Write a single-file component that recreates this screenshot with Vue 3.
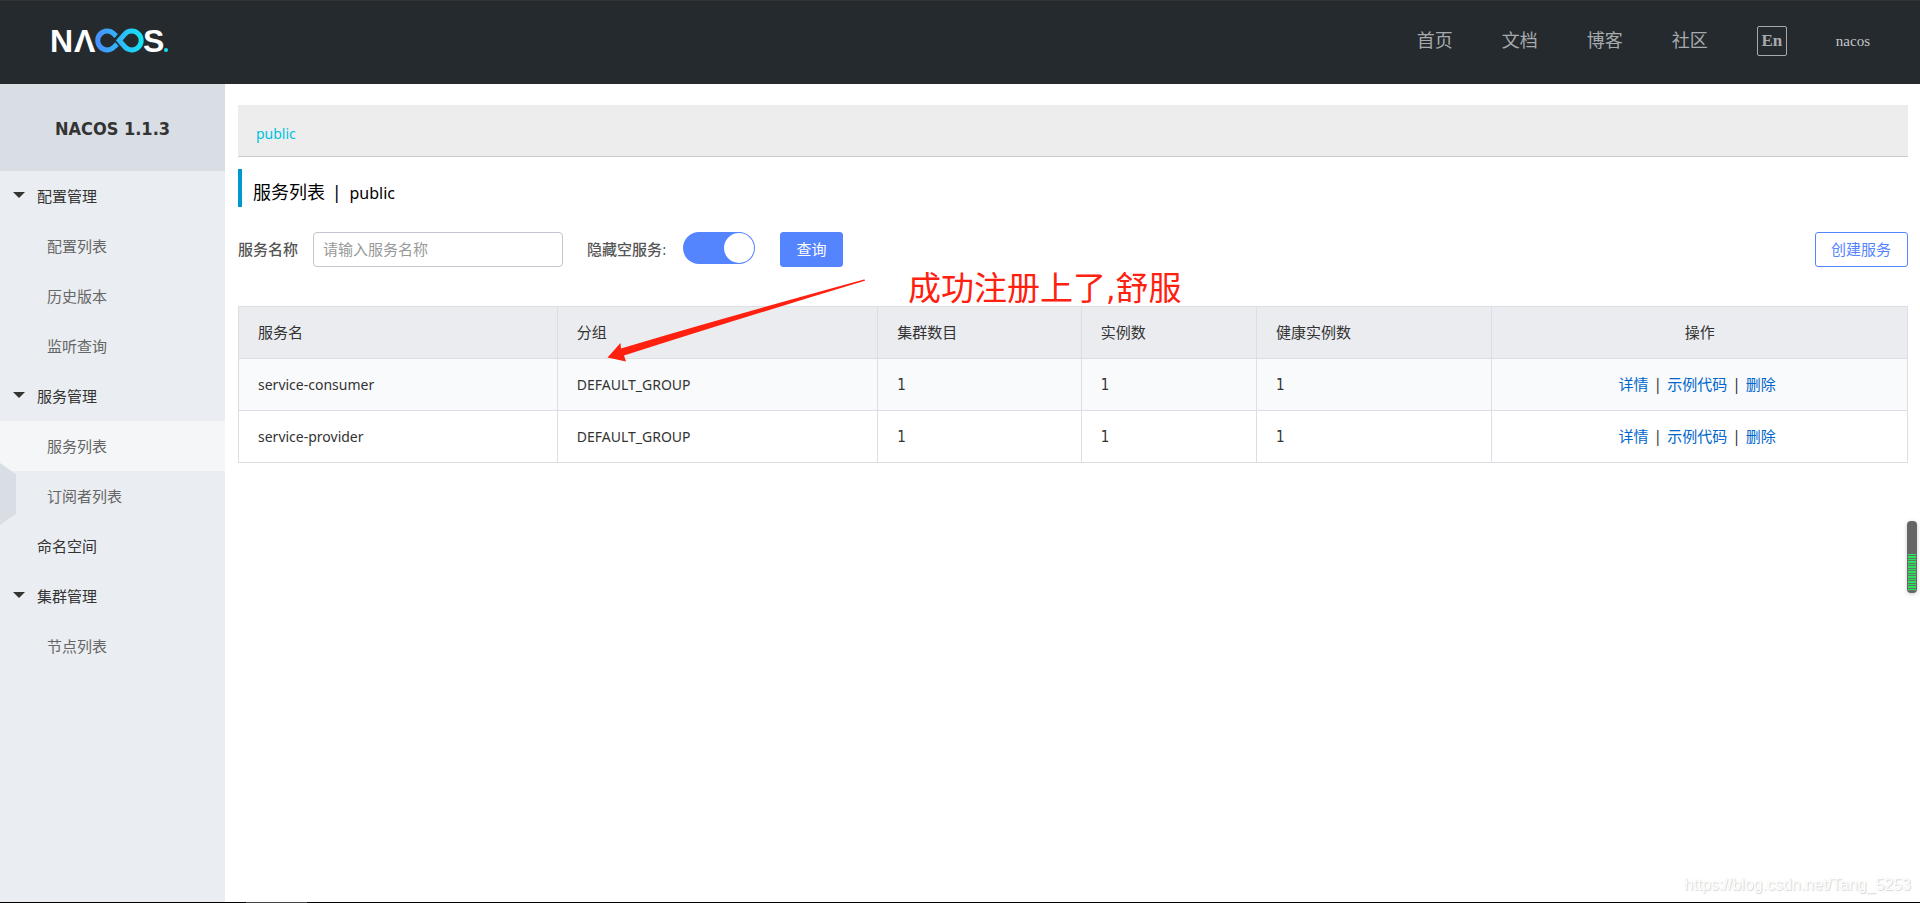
<script setup>
import { ref } from 'vue'

const navLinks = ['首页', '文档', '博客', '社区']

const menu = [
  { label: '配置管理', group: true },
  { label: '配置列表', child: true },
  { label: '历史版本', child: true },
  { label: '监听查询', child: true },
  { label: '服务管理', group: true },
  { label: '服务列表', child: true, active: true },
  { label: '订阅者列表', child: true },
  { label: '命名空间' },
  { label: '集群管理', group: true },
  { label: '节点列表', child: true },
]

const services = [
  { name: 'service-consumer', group: 'DEFAULT_GROUP', clusters: 1, instances: 1, healthy: 1 },
  { name: 'service-provider', group: 'DEFAULT_GROUP', clusters: 1, instances: 1, healthy: 1 },
]

const keyword = ref('')
const hideEmpty = ref(true)
</script>

<template>
  <div class="page">
    <header class="topbar">
      <a class="logo" href="#" aria-label="NACOS">
        <svg width="128" height="44" viewBox="-6 0 128 44">
          <defs>
            <linearGradient id="loop" gradientUnits="userSpaceOnUse" x1="43" y1="0" x2="91" y2="0">
              <stop offset="0" stop-color="#4a8cff" />
              <stop offset="1" stop-color="#14e4f5" />
            </linearGradient>
          </defs>
          <text class="logo-letter" x="-2" y="33">N</text>
          <text class="logo-letter wide" x="22" y="33">Λ</text>
          <g fill="none" stroke="url(#loop)" stroke-width="5">
            <path d="M64.300 17L61.700 14.800A9.400 9.400 0 1 0 61.700 28.200L65 25.200" />
            <path d="M67.200 21.500L72.800 15.200A9.400 9.400 0 1 1 72.800 27.800Z" />
          </g>
          <text class="logo-letter" x="91" y="33">S</text>
          <circle cx="114" cy="31" r="2" fill="#14e4f5" />
        </svg>
      </a>
      <nav class="nav">
        <a v-for="link in navLinks" :key="link" href="#">{{ link }}</a>
        <button class="lang" type="button">En</button>
        <a class="user" href="#">nacos</a>
      </nav>
    </header>

    <div class="body">
      <aside class="sidebar">
        <h1 class="product">NACOS 1.1.3</h1>
        <ul class="menu">
          <li v-for="item in menu" :key="item.label">
            <a href="#" :class="{ child: item.child, active: item.active, group: item.group }">{{ item.label }}</a>
          </li>
        </ul>
        <button class="collapse" type="button" aria-label="收起菜单"></button>
      </aside>

      <main class="content">
        <div class="namespaces"><a href="#">public</a></div>
        <h2 class="title">服务列表<span class="bar">|</span><span class="latin">public</span></h2>

        <form class="filters" @submit.prevent>
          <label class="name-label" for="service-name">服务名称</label>
          <input id="service-name" v-model="keyword" class="text-input" type="text" placeholder="请输入服务名称" />
          <label class="hide-label" for="hide-empty">隐藏空服务:</label>
          <input id="hide-empty" v-model="hideEmpty" class="switch" type="checkbox" role="switch" />
          <button class="btn primary" type="submit">查询</button>
          <button class="btn outline" type="button">创建服务</button>
        </form>

        <table class="services">
          <colgroup>
            <col class="c-name" />
            <col class="c-group" />
            <col class="c-clusters" />
            <col class="c-instances" />
            <col class="c-healthy" />
            <col />
          </colgroup>
          <thead>
            <tr>
              <th>服务名</th>
              <th>分组</th>
              <th>集群数目</th>
              <th>实例数</th>
              <th>健康实例数</th>
              <th class="actions">操作</th>
            </tr>
          </thead>
          <tbody>
            <tr v-for="s in services" :key="s.name">
              <td class="latin">{{ s.name }}</td>
              <td class="latin">{{ s.group }}</td>
              <td>{{ s.clusters }}</td>
              <td>{{ s.instances }}</td>
              <td>{{ s.healthy }}</td>
              <td class="actions">
                <a href="#">详情</a><span class="sep">|</span><a href="#">示例代码</a><span class="sep">|</span><a href="#">删除</a>
              </td>
            </tr>
          </tbody>
        </table>

        <svg class="arrow" width="260" height="84" viewBox="0 0 260 84">
          <path d="M2.500 79.500L15.500 65L16 70.500Q100 45 259 1.500Q261 2 259 3Q130 42 19 77.500L21 83.500Z" fill="#ff2010" />
        </svg>
        <p class="note">成功注册上了,舒服</p>
      </main>
    </div>

    <div class="meter"><span></span></div>
    <p class="watermark">https://blog.csdn.net/Tang_5253</p>
    <div class="taskline"></div>
  </div>
</template>

<style>
body {
  margin: 0;
}
</style>

<style scoped>
.page {
  position: relative;
  display: flex;
  flex-direction: column;
  min-height: 100vh;
  box-sizing: border-box;
  background: #fff;
  color: #333;
  font: 15px/20px "DejaVu Sans Condensed", "Noto Sans CJK SC", sans-serif;
}
a {
  text-decoration: none;
}
button,
input {
  font: inherit;
}
.topbar {
  display: flex;
  align-items: center;
  justify-content: space-between;
  box-sizing: border-box;
  height: 84px;
  padding: 0 50px 3px 46px;
  border-top: 1px solid #333;
  background: #252a2f;
}
.logo svg {
  display: block;
}
.logo-letter {
  fill: #fff;
  font: bold 32px "Liberation Sans Narrow", "Liberation Sans", sans-serif;
}
.logo-letter.wide {
  font-family: "Liberation Sans", sans-serif;
}
.nav {
  display: flex;
  align-items: center;
  gap: 49px;
  font-size: 18px;
}
.nav a {
  color: #a7aaac;
}
.lang {
  width: 30px;
  height: 30px;
  padding: 0;
  border: 1px solid #a7aaac;
  border-radius: 2px;
  background: none;
  color: #a7aaac;
  font: bold 17px/28px "Liberation Serif", serif;
}
.nav .user {
  color: #c4c6c8;
  font: 15px/20px "Liberation Serif", serif;
}
.body {
  display: flex;
  flex: 1;
}
.sidebar {
  position: relative;
  flex: none;
  width: 225px;
  background: #eaedf1;
}
.product {
  margin: 0;
  padding-top: 2px;
  background: #d9dde4;
  font-size: 18px;
  font-weight: bold;
  line-height: 85px;
  text-align: center;
}
.menu {
  margin: 0;
  padding: 0;
  list-style: none;
}
.menu a {
  position: relative;
  display: block;
  padding-top: 2px;
  padding-left: 37px;
  color: #333;
  line-height: 48px;
}
.menu .child {
  padding-left: 47px;
  color: #666;
}
.menu .active {
  background: #f4f6f8;
}
.menu .group::before {
  content: "";
  position: absolute;
  top: 21px;
  left: 13px;
  border: 6px solid transparent;
  border-top-color: #333;
  border-bottom: 0;
}
.collapse {
  position: absolute;
  top: 379px;
  left: 0;
  width: 16px;
  height: 62px;
  padding: 0;
  border: 0;
  background: #d9dee4;
  clip-path: polygon(0 0, 100% 18%, 100% 82%, 0 100%);
}
.content {
  position: relative;
  flex: 1;
  min-width: 0;
  padding: 21px 12px 0 13px;
}
.namespaces {
  padding: 6px 18px 0;
  border-bottom: 1px solid #ccc;
  background: #ededed;
  font-family: "Noto Sans", sans-serif;
  font-size: 14px;
  line-height: 45px;
}
.namespaces a {
  color: #00c1de;
}
.title {
  margin: 12px 0 25px;
  padding: 10px 0 0 11px;
  border-left: 4px solid #09c;
  color: #000;
  font-size: 18px;
  font-weight: normal;
  line-height: 28px;
}
.title .latin {
  font-family: "Noto Sans", sans-serif;
  font-size: 16px;
}
.bar {
  margin: 0 10px 0 9px;
}
.filters {
  display: flex;
  align-items: center;
  height: 35px;
  margin-bottom: 39px;
}
.name-label,
.hide-label {
  color: #555;
  font-weight: 500;
}
.text-input {
  box-sizing: border-box;
  width: 250px;
  height: 35px;
  margin: 0 24px 0 15px;
  padding: 0 9px;
  border: 1px solid #c4c6cf;
  border-radius: 4px;
  background: #fff;
}
.text-input::placeholder {
  color: #999;
}
.switch {
  appearance: none;
  align-self: flex-start;
  box-sizing: border-box;
  display: flex;
  justify-content: flex-end;
  width: 72px;
  height: 32px;
  margin: 0 25px 0 16px;
  padding: 1px;
  border-radius: 16px;
  background: #5584ff;
}
.switch::before {
  content: "";
  width: 30px;
  height: 30px;
  border-radius: 50%;
  background: #fff;
}
.switch:not(:checked) {
  justify-content: flex-start;
  background: #c4c6cf;
}
.btn {
  height: 35px;
  padding: 0 15px 0 16px;
  border: 1px solid #5584ff;
  border-radius: 3px;
}
.primary {
  background: #5584ff;
  color: #fff;
}
.outline {
  margin-left: auto;
  padding: 0 16px 0 15px;
  background: #fff;
  color: #5584ff;
}
.services {
  width: 100%;
  border-collapse: collapse;
  table-layout: fixed;
}
.c-name { width: 19.1%; }
.c-group { width: 19.2%; }
.c-clusters { width: 12.2%; }
.c-instances { width: 10.5%; }
.c-healthy { width: 14.1%; }
.services th,
.services td {
  height: 51px;
  padding: 0 19px;
  border: 1px solid #dcdee3;
  font-weight: normal;
  text-align: left;
}
.services .latin {
  font-family: "Noto Sans", sans-serif;
  font-size: 14px;
}
.services th {
  background: #ebecf0;
}
.services tbody tr:first-child {
  background: #f9fafc;
}
.services .actions {
  text-align: center;
}
.services td.actions {
  padding-right: 24px;
}
.services a {
  color: #06c;
}
.sep {
  margin: 0 7px;
}
.arrow {
  position: absolute;
  top: 194px;
  left: 380px;
}
.note {
  position: absolute;
  top: 185px;
  left: 683px;
  margin: 0;
  color: #ff2010;
  font-size: 33px;
  line-height: 40px;
  white-space: nowrap;
}
.meter {
  position: absolute;
  top: 521px;
  right: 3px;
  box-sizing: border-box;
  display: flex;
  flex-direction: column;
  justify-content: flex-end;
  width: 10px;
  height: 72px;
  padding: 2px 1px;
  border-radius: 4px;
  background: #666;
  box-shadow: 0 1px 4px #ccc;
}
.meter span {
  height: 37px;
  background: repeating-linear-gradient(#2ee060 0 1px, #5a7a60 1px 2px, #2ee060 2px 4px, #5a7a60 4px 5px);
}
.watermark {
  position: absolute;
  right: 9px;
  bottom: 8px;
  margin: 0;
  color: #fff;
  font: 16px/20px "Liberation Sans", sans-serif;
  text-shadow: 1px 1px 1px #d4d4d4, 0 0 1px #e4e4e4;
}
.taskline {
  height: 1px;
  background: linear-gradient(90deg, #000 246px, #444 246px 307px, #000 307px);
}
</style>
